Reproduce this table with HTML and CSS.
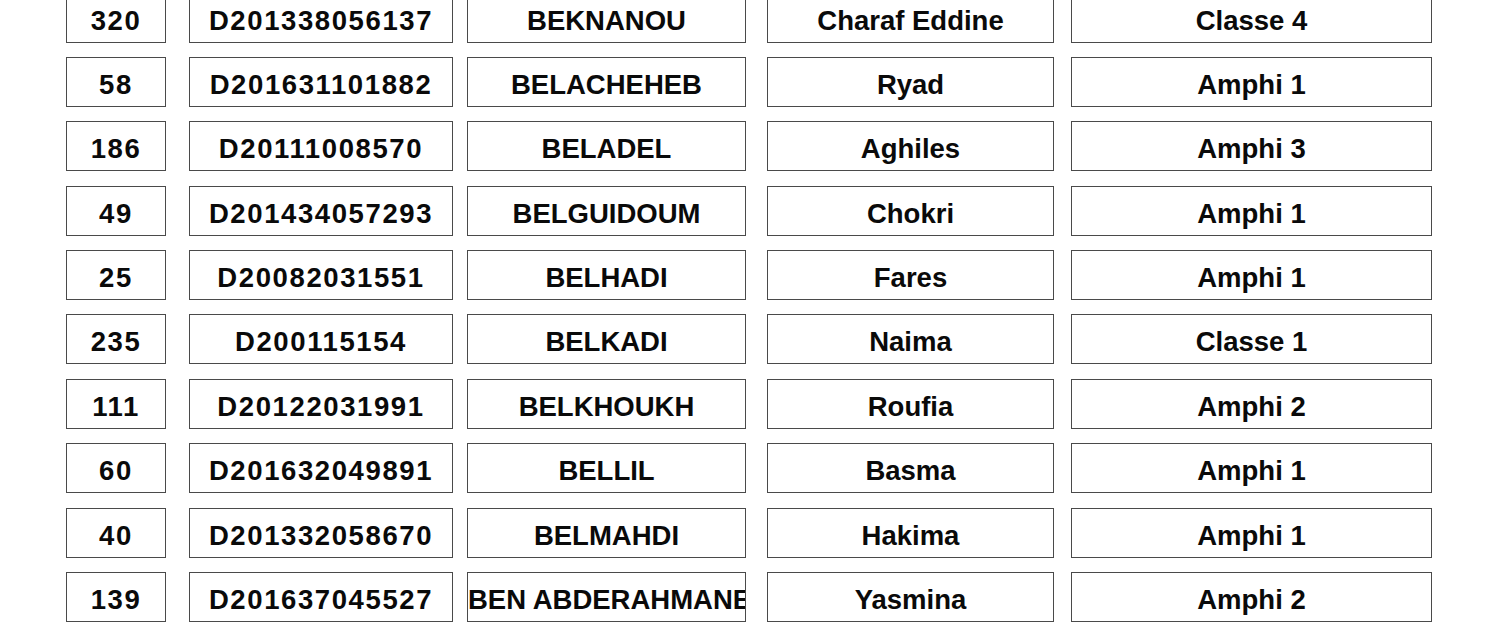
FILE: index.html
```html
<!DOCTYPE html>
<html lang="fr">
<head>
<meta charset="utf-8">
<title>Liste</title>
<link rel="stylesheet" href="styles.css">
</head>
<body>
<div class="sheet">
  <div class="cell c1 num">320</div><div class="cell c2 num">D201338056137</div><div class="cell c3">BEKNANOU</div><div class="cell c4">Charaf Eddine</div><div class="cell c5">Classe 4</div>
  <div class="cell c1 num">58</div><div class="cell c2 num">D201631101882</div><div class="cell c3">BELACHEHEB</div><div class="cell c4">Ryad</div><div class="cell c5">Amphi 1</div>
  <div class="cell c1 num">186</div><div class="cell c2 num">D20111008570</div><div class="cell c3">BELADEL</div><div class="cell c4">Aghiles</div><div class="cell c5">Amphi 3</div>
  <div class="cell c1 num">49</div><div class="cell c2 num">D201434057293</div><div class="cell c3">BELGUIDOUM</div><div class="cell c4">Chokri</div><div class="cell c5">Amphi 1</div>
  <div class="cell c1 num">25</div><div class="cell c2 num">D20082031551</div><div class="cell c3">BELHADI</div><div class="cell c4">Fares</div><div class="cell c5">Amphi 1</div>
  <div class="cell c1 num">235</div><div class="cell c2 num">D200115154</div><div class="cell c3">BELKADI</div><div class="cell c4">Naima</div><div class="cell c5">Classe 1</div>
  <div class="cell c1 num">111</div><div class="cell c2 num">D20122031991</div><div class="cell c3">BELKHOUKH</div><div class="cell c4">Roufia</div><div class="cell c5">Amphi 2</div>
  <div class="cell c1 num">60</div><div class="cell c2 num">D201632049891</div><div class="cell c3">BELLIL</div><div class="cell c4">Basma</div><div class="cell c5">Amphi 1</div>
  <div class="cell c1 num">40</div><div class="cell c2 num">D201332058670</div><div class="cell c3">BELMAHDI</div><div class="cell c4">Hakima</div><div class="cell c5">Amphi 1</div>
  <div class="cell c1 num">139</div><div class="cell c2 num">D201637045527</div><div class="cell c3">BEN ABDERAHMANE</div><div class="cell c4">Yasmina</div><div class="cell c5">Amphi 2</div>
</div>
</body>
</html>
```
FILE: styles.css
```css
html, body {
  margin: 0;
  padding: 0;
  background: #ffffff;
}
body {
  overflow: hidden;
  font-family: "Liberation Sans", Arial, sans-serif;
}
.sheet {
  display: grid;
  grid-template-columns: 100px 287px 293px 308px 378px;
  grid-auto-rows: 50px;
  row-gap: 14.375px;
  margin-top: -7.4px;
  padding-left: 66px;
  width: max-content;
}
.cell {
  box-sizing: border-box;
  height: 50px;
  border: 1px solid #4a4a4a;
  padding-top: 5px;
  line-height: 43px;
  font-size: 27.5px;
  font-weight: bold;
  color: #0a0a0a;
  text-align: center;
  white-space: nowrap;
  overflow: hidden;
}
.num {
  letter-spacing: 1.6px;
}
.c2 { margin-left: 23px; }
.c3 { margin-left: 14px; }
.c4 { margin-left: 21px; }
.c5 { margin-left: 17px; }
```
